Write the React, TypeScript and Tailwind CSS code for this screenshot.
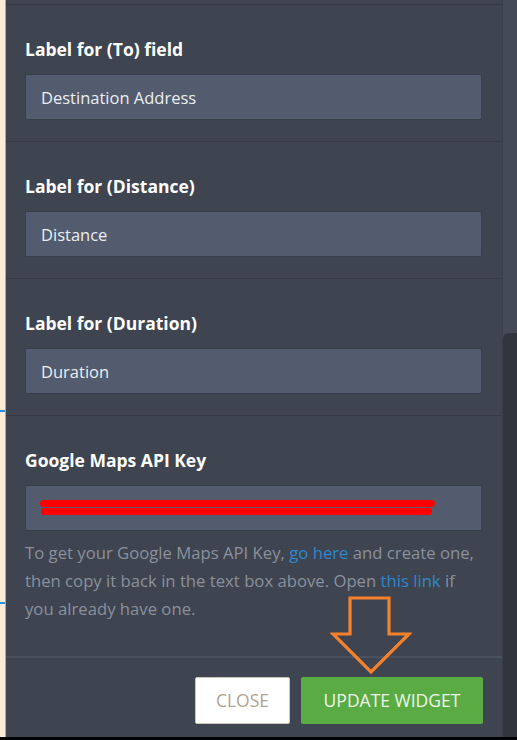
const font = { fontFamily: '"Open Sans", "Liberation Sans", sans-serif' };

type FieldProps = {
  label: string;
  value?: string;
  children?: React.ReactNode;
  help?: React.ReactNode;
};

const Field = ({ label, value, children, help }: FieldProps) => (
  <div className={`border-t border-[#353a44] pl-[19px] pr-[20px] pt-[32px] ${help ? 'pb-[33px]' : 'pb-[21px]'}`}>
    <label className="block h-[24px] text-[17.5px] leading-[24px] font-bold text-white">{label}</label>
    <div className="relative mt-[13px] h-[46px] rounded-[2px] border border-[#393f4a] bg-[#525c6e] px-[15px] text-[16.5px] leading-[45px] text-[#eceef1]">
      {value}
      {children}
    </div>
    {help && <div className="mt-[8px] text-[16.7px] leading-[28px] text-[#8a919c]">{help}</div>}
  </div>
);

const Arrow = () => (
  <svg className="absolute left-[330px] top-[596px]" width="82" height="80" viewBox="0 0 82 80">
    <path
      d="M20 2 H59 V38 H79 L41 76 L3 38 H20 Z"
      fill="none"
      stroke="#f5822a"
      strokeWidth="3.2"
      strokeLinejoin="miter"
    />
  </svg>
);

export default function App() {
  return (
    <div className="relative w-[517px] h-[740px] overflow-hidden bg-black" style={font}>
      <div className="flex h-[737px]">
        <div className="relative w-[6px] shrink-0 border-r border-[#a9a9a9] bg-[#fdebd7]">
          <div className="absolute left-0 top-[410px] h-[2px] w-[5px] bg-[#2b8fdb]" />
          <div className="absolute left-0 top-[602px] h-[2px] w-[5px] bg-[#2b8fdb]" />
        </div>
        <div className="flex flex-1 flex-col bg-[#3e4450] pt-[4px]">
          <Field label="Label for (To) field" value="Destination Address" />
          <Field label="Label for (Distance)" value="Distance" />
          <Field label="Label for (Duration)" value="Duration" />
          <Field
            label="Google Maps API Key"
            help={
              <>
                <div className="whitespace-nowrap">
                  <span>To get your Google Maps API Key, </span>
                  <span className="text-[#2f87cc]">go here</span>
                  <span> and create one,</span>
                </div>
                <div className="whitespace-nowrap">
                  <span>then copy it back in the text box above. Open </span>
                  <span className="text-[#2f87cc]">this link</span>
                  <span> if</span>
                </div>
                <div>you already have one.</div>
              </>
            }
          >
            <div className="absolute left-[14px] top-[14px] h-[7px] w-[395px] rounded-full bg-[#ff0000]" />
            <div className="absolute left-[15px] top-[22px] h-[7px] w-[391px] rounded-[3px] bg-[#ff0000]" />
          </Field>
          <div className="flex flex-1 justify-end gap-[11px] border-t-2 border-[#4a515e] pr-[19px] pt-[19px]">
            <button className="h-[47px] w-[95px] rounded-[2px] border border-[#cfc6bb] bg-white text-[17.5px] text-[#b0a393]">
              CLOSE
            </button>
            <button className="h-[47px] w-[182px] rounded-[2px] bg-[#5aab43] text-[17.5px] text-[#eef5ea]">
              UPDATE WIDGET
            </button>
          </div>
        </div>
        <div className="flex w-[15px] shrink-0 flex-col border-l border-[#3a404b] bg-[#444b57]">
          <div className="mt-[333px] flex-1 rounded-tl-[6px] bg-[#30353e]" />
        </div>
      </div>
      <Arrow />
    </div>
  );
}
